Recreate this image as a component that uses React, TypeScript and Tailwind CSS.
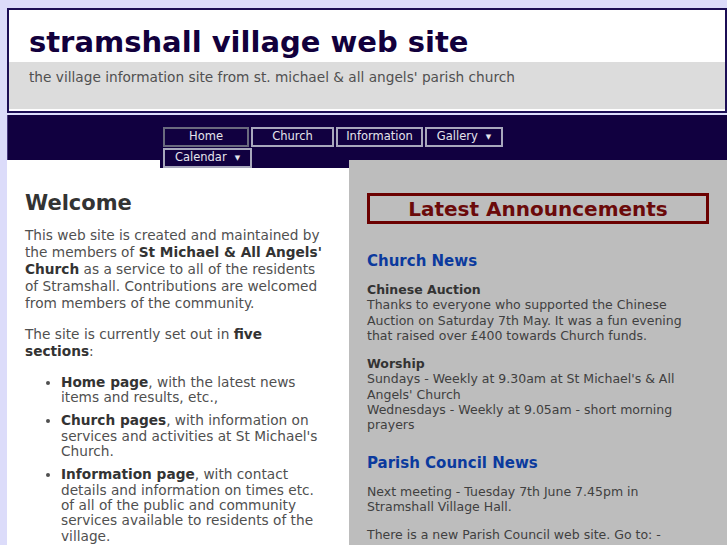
const navItems = [
  { label: 'Home', w: 'w-[86px]', active: true },
  { label: 'Church', w: 'w-[83px]' },
  { label: 'Information', w: 'w-[87px]' },
  { label: 'Gallery', w: 'w-[78px]', menu: true },
];

function NavButton({ label, w, active, menu }: { label: string; w: string; active?: boolean; menu?: boolean }) {
  return (
    <div
      className={`${w} h-[20px] flex items-center justify-center gap-[8px] bg-[#110040] border-2 text-[11.5px] text-[#e4e4ec] ${
        active ? 'border-[#6a6a7e]' : 'border-[#a8a8bc]'
      }`}
    >
      <span>{label}</span>
      {menu && <span className="text-[7px] leading-none">▼</span>}
    </div>
  );
}

export default function App() {
  return (
    <div className="min-h-screen bg-[#dcdcfa] pl-[7px] pt-[8px] overflow-hidden" style={{ fontFamily: '"DejaVu Sans", Verdana, sans-serif' }}>
      {/* Header */}
      <div className="w-[720px] border-2 border-[#1c0e55]">
        <div className="bg-white h-[52px] px-[20px] flex items-center">
          <h1 className="text-[29px] font-bold text-[#12003c] leading-none pt-[12px]">stramshall village web site</h1>
        </div>
        <div className="bg-[#dcdcdc] h-[49px] px-[20px] pt-[7px] border-b-2 border-white">
          <p className="text-[13.7px] text-[#505050] leading-[17px]">
            the village information site from st. michael &amp; all angels' parish church
          </p>
        </div>
      </div>

      {/* Nav */}
      <div className="relative z-10 mt-[2px] h-[45px] bg-[#110040] border-l border-[#4a3a80]">
        <div className="ml-[155px] pt-[12px] w-[350px] flex flex-wrap gap-x-[2px] gap-y-[1px]">
          {navItems.map(item => (
            <NavButton key={item.label} {...item} />
          ))}
          <NavButton label="Calendar" w="w-[89px]" menu />
        </div>
      </div>

      {/* Content */}
      <div className="flex">
        {/* Left column */}
        <div className="w-[342px] bg-white pl-[18px] pr-[18px] pb-[20px]">
          <div className="h-[8px] flex">
            <div className="w-[135px]" />
            <div className="flex-1 bg-[#110040] -mr-[18px]" />
          </div>
          <h2 className="mt-[22px] text-[21px] font-bold text-[#333] leading-[26px]">Welcome</h2>
          <p className="mt-[11px] text-[13.7px] leading-[17px] text-[#505050]">
            This web site is created and maintained by the members of{' '}
            <b className="text-[#333]">St Michael &amp; All Angels' Church</b> as a service to all of the residents of
            Stramshall. Contributions are welcomed from members of the community.
          </p>
          <p className="mt-[14px] text-[13.7px] leading-[17px] text-[#505050]">
            The site is currently set out in <b className="text-[#333]">five sections</b>:
          </p>
          <ul className="mt-[15px] pl-[36px] list-disc text-[13.7px] leading-[15.4px] text-[#505050] space-y-[7.6px]">
            <li>
              <b className="text-[#333]">Home page</b>, with the latest news items and results, etc.,
            </li>
            <li>
              <b className="text-[#333]">Church pages</b>, with information on services and activities at St Michael's
              Church.
            </li>
            <li>
              <b className="text-[#333]">Information page</b>, with contact details and information on times etc. of all
              of the public and community services available to residents of the village.
            </li>
          </ul>
        </div>

        {/* Right column */}
        <div className="flex-1 bg-[#bdbdbd] px-[18px] pb-[20px] text-[12.5px] leading-[15.3px] text-[#404040]">
          <div className="mt-[33px] h-[31px] border-[3px] border-[#6b0000] flex items-center justify-center">
            <h2 className="text-[20px] font-bold text-[#6b0a0a] leading-none">Latest Announcements</h2>
          </div>

          <h3 className="mt-[28px] text-[15px] font-bold text-[#0b3a9e] leading-[18px]">Church News</h3>
          <div className="mt-[12px]">
            <div className="font-bold text-[#333]">Chinese Auction</div>
            <div>
              Thanks to everyone who supported the Chinese Auction on Saturday 7th May. It was a fun evening that
              raised over £400 towards Church funds.
            </div>
          </div>
          <div className="mt-[13px]">
            <div className="font-bold text-[#333]">Worship</div>
            <div>Sundays - Weekly at 9.30am at St Michael's &amp; All Angels' Church</div>
            <div>Wednesdays - Weekly at 9.05am - short morning prayers</div>
          </div>

          <h3 className="mt-[21px] text-[15px] font-bold text-[#0b3a9e] leading-[18px]">Parish Council News</h3>
          <p className="mt-[12px]">Next meeting - Tuesday 7th June 7.45pm in Stramshall Village Hall.</p>
          <p className="mt-[13px]">There is a new Parish Council web site. Go to: -</p>
        </div>
      </div>
    </div>
  );
}
